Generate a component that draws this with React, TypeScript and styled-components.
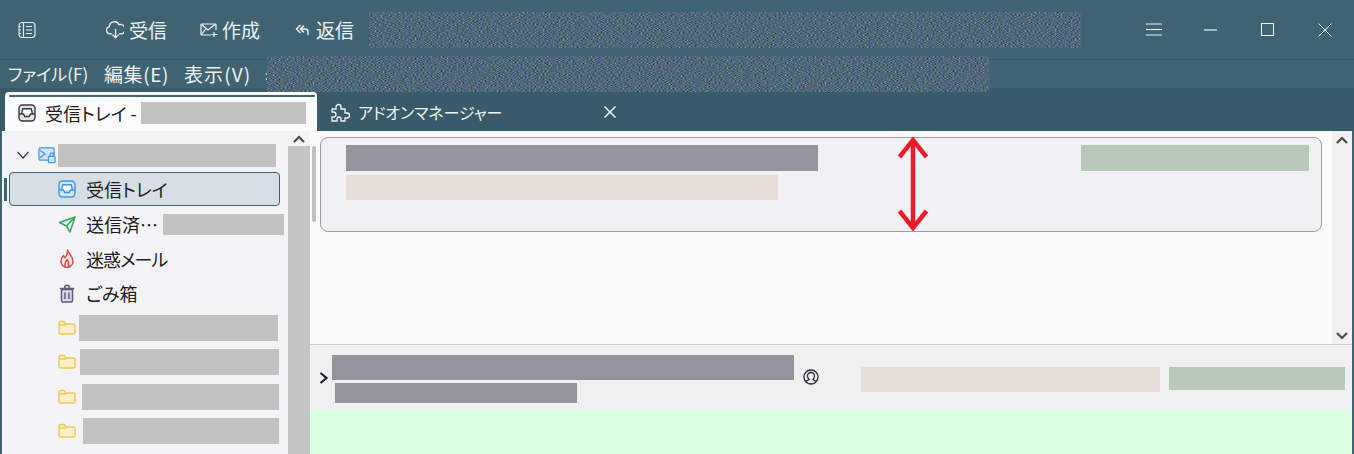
import React from 'react';
import styled, { createGlobalStyle } from 'styled-components';

const GlobalStyle = createGlobalStyle`
  html, body {
    margin: 0;
    padding: 0;
    background: #3f6372;
    overflow: hidden;
  }
  body {
    font-family: "Noto Sans CJK JP", "Noto Sans", sans-serif;
    font-feature-settings: "palt";
  }
`;

const Window = styled.div`
  width: 1354px;
  height: 454px;
  display: flex;
  flex-direction: column;
  overflow: hidden;
  background: #3f6372;
`;

const TitleBar = styled.div`
  height: 59px;
  flex: none;
  display: flex;
  align-items: center;
  border-bottom: 1px solid #37586a;
  box-sizing: content-box;
  padding-left: 18px;
  color: #eef3f4;
`;

const SidebarToggle = styled.div`
  width: 18px;
  height: 18px;
  flex: none;
  margin-right: 70px;
  display: flex;
`;

const ToolButton = styled.div<{ $width: number; $gap: number }>`
  width: ${({ $width }) => $width}px;
  flex: none;
  display: flex;
  align-items: center;
  gap: ${({ $gap }) => $gap}px;
  font-size: 19px;
  line-height: 24px;
  white-space: nowrap;
`;

const Noise = styled.div<{ $width: number; $height: number }>`
  position: relative;
  z-index: 2;
  flex: none;
  width: ${({ $width }) => $width}px;
  height: ${({ $height }) => $height}px;
  svg {
    display: block;
  }
`;

const WindowControls = styled.div`
  margin-left: 44px;
  flex: none;
  display: flex;
  align-items: center;
`;

const ControlButton = styled.div`
  width: 57px;
  height: 16px;
  display: flex;
  justify-content: center;
  align-items: center;
`;

const MenuBar = styled.div`
  height: 28px;
  flex: none;
  display: flex;
  align-items: center;
  padding-left: 8px;
  color: #eef3f4;
`;

const MenuItem = styled.div<{ $width: number; $size: number; $spacing?: number }>`
  width: ${({ $width }) => $width}px;
  flex: none;
  white-space: nowrap;
  line-height: 28px;
  font-size: ${({ $size }) => $size}px;
  letter-spacing: ${({ $spacing }) => $spacing ?? 0}px;
`;

const MenuDots = styled.span`
  width: 2px;
  font-size: 12px;
  margin-left: -1px;
`;

const TabBar = styled.div`
  height: 43px;
  flex: none;
  display: flex;
  align-items: flex-end;
  background: #385a69;
  padding-left: 5px;
  color: #f0f4f5;
`;

const ActiveTab = styled.div`
  width: 312px;
  height: 39px;
  box-sizing: border-box;
  background: #fbfbfc;
  border-radius: 4px 4px 0 0;
  display: flex;
  align-items: center;
  padding: 3px 0 0 13px;
  color: #1c1b22;
  font-size: 18px;
  position: relative;
  &::before {
    content: "";
    position: absolute;
    left: 4px;
    right: 2px;
    top: 3px;
    height: 2px;
    border-radius: 1px;
    background: #3f6372;
  }
`;

const TabLabel = styled.span`
  margin-left: 9px;
  white-space: nowrap;
  margin-right: 4px;
`;

const InactiveTab = styled.div`
  height: 39px;
  display: flex;
  align-items: center;
  padding: 3px 0 0 13px;
  font-size: 16px;
`;

const InactiveLabel = styled.span`
  width: 246px;
  margin-left: 7px;
  white-space: nowrap;
  letter-spacing: -0.1px;
`;

const Body = styled.div`
  flex: 1;
  min-height: 0;
  display: flex;
  background: #fafafb;
  padding: 0 2px;
  position: relative;
  &::before,
  &::after {
    content: "";
    position: absolute;
    top: 0;
    bottom: 0;
    width: 2px;
    background: #3f6372;
  }
  &::before {
    left: 0;
  }
  &::after {
    right: 0;
  }
`;

const Sidebar = styled.div`
  width: 286px;
  flex: none;
  background: #f4f4f6;
  padding-top: 7px;
  box-sizing: border-box;
  color: #1c1b22;
`;

const TreeRow = styled.div<{ $selected?: boolean }>`
  height: 34.5px;
  box-sizing: border-box;
  margin: 0 8px 0 7px;
  padding-left: 49px;
  display: flex;
  align-items: center;
  font-size: 18px;
  white-space: nowrap;
  position: relative;
  border-radius: 4px;
  ${({ $selected }) =>
    $selected &&
    `
    background: #d8dfe4;
    border: 1px solid #3f6372;
    padding-left: 48px;
    margin-top: -1px;
    margin-bottom: 1px;
    &::before {
      content: "";
      position: absolute;
      left: -6px;
      top: 5px;
      bottom: 4px;
      width: 3px;
      background: #3f6372;
    }
  `}
`;

const AccountRow = styled(TreeRow)`
  padding-left: 29px;
`;

const Twisty = styled.div`
  width: 12px;
  height: 12px;
  margin-left: -21px;
  margin-right: 9px;
  display: flex;
`;

const RowIcon = styled.div`
  width: 18px;
  height: 18px;
  flex: none;
  display: flex;
  align-items: center;
  justify-content: center;
`;

const RowLabel = styled.span<{ $spacing?: number }>`
  margin-left: 10px;
  letter-spacing: ${({ $spacing }) => $spacing ?? 0}px;
`;

const Redact = styled.div<{ $width: number; $height: number; $color?: string; $left?: number }>`
  flex: none;
  width: ${({ $width }) => $width}px;
  height: ${({ $height }) => $height}px;
  margin-left: ${({ $left }) => $left ?? 0}px;
  background: ${({ $color }) => $color ?? '#c2c2c2'};
`;

const SideScroll = styled.div`
  width: 22px;
  flex: none;
  background: #c4c4c4;
`;

const ScrollCap = styled.div`
  height: 15px;
  background: #f4f4f6;
  display: flex;
  justify-content: center;
  align-items: center;
`;

const Main = styled.div`
  flex: 1;
  min-width: 0;
  display: flex;
  flex-direction: column;
`;

const ListArea = styled.div`
  height: 213px;
  flex: none;
  display: flex;
  background: #fafafb;
  border-bottom: 1px solid #cfcfd2;
`;

const Splitter = styled.div`
  width: 10px;
  flex: none;
  padding: 15px 4px 0 2px;
  box-sizing: border-box;
`;

const SplitThumb = styled.div`
  height: 76px;
  border-radius: 2px;
  background: #bfc0c3;
`;

const ListContent = styled.div`
  width: 1012px;
  flex: none;
  padding: 6px 10px 0 0;
  box-sizing: border-box;
`;

const MessageCard = styled.div`
  height: 95px;
  box-sizing: border-box;
  background: #f1f1f3;
  border: 1px solid #9b9ba0;
  border-radius: 8px;
  padding: 7px 12px 0 25px;
  display: flex;
  position: relative;
`;

const CardLines = styled.div`
  display: flex;
  flex-direction: column;
  gap: 4px;
  flex: 1;
`;

const ArrowOverlay = styled.div`
  position: absolute;
  left: 577px;
  top: -1px;
  width: 30px;
  height: 94px;
`;

const ListScroll = styled.div`
  width: 20px;
  flex: none;
  background: #f0f0f0;
  display: flex;
  flex-direction: column;
  justify-content: space-between;
  align-items: center;
  padding: 5px 0 4px;
  box-sizing: border-box;
`;

const HeaderPane = styled.div`
  height: 65px;
  flex: none;
  background: #f0f0f0;
  display: flex;
  align-items: flex-start;
  padding-left: 9px;
  box-sizing: border-box;
`;

const HeaderChevron = styled.div`
  width: 13px;
  height: 14px;
  margin-top: 26px;
  flex: none;
  display: flex;
`;

const HeaderLines = styled.div`
  display: flex;
  flex-direction: column;
  padding-top: 10px;
  gap: 3px;
  width: 471px;
  flex: none;
`;

const PersonIcon = styled.div`
  width: 16px;
  height: 16px;
  margin-top: 24px;
  flex: none;
  display: flex;
`;

const HeaderRight = styled.div`
  display: flex;
  gap: 9px;
  margin-left: 42px;
  padding-top: 22px;
`;

const Preview = styled.div`
  flex: 1;
  background: #d8ffdf;
`;

const GREY = '#94949c';
const ROSE = '#e6ddd8';
const SAGE = '#b9c9b9';

const NoiseFill = ({ id, width, height }: { id: string; width: number; height: number }) => (
  <svg width={width} height={height}>
    <filter id={id} x="0" y="0" width="100%" height="100%" colorInterpolationFilters="sRGB">
      <feTurbulence type="fractalNoise" baseFrequency="0.5 1" numOctaves={2} seed={4} />
      <feColorMatrix
        type="matrix"
        values="0.75 0.2 0 0 -0.16  0.15 0.8 0 0 -0.07  0 0.15 0.9 0 -0.05  0 0 0 0 1"
      />
    </filter>
    <rect width={width} height={height} filter={`url(#${id})`} />
  </svg>
);

const CloudIcon = () => (
  <svg width="18" height="18" viewBox="0.5 1 16 16" fill="none" stroke="#eef3f4" strokeWidth="1.2">
    <path d="M6 12.500H4a3.300 3.300 0 0 1-.5-6.500 4.500 4.500 0 0 1 8.500-1.800 3.800 3.800 0 0 1 2.500 8.300H12" />
    <path d="M9 8v8M6.300 13.300 9 16l2.700-2.700" />
  </svg>
);

const ComposeIcon = () => (
  <svg width="18" height="16" viewBox="0 0 18 16" fill="none" stroke="#eef3f4" strokeWidth="1.2">
    <path d="M16 8V3a1 1 0 0 0-1-1H2a1 1 0 0 0-1 1v9a1 1 0 0 0 1 1h9" />
    <path d="M1.500 2.500 8 8l7-5.500M1.500 12.500 6 6.500" />
    <path d="M14 10v5M11.500 12.500h6" />
  </svg>
);

const ReplyIcon = () => (
  <svg width="15" height="14" viewBox="0 0 15 14" fill="none" stroke="#eef3f4" strokeWidth="1.4">
    <path d="M5.500 2 1.500 6l4 4" />
    <path d="M9 2.500 5.500 6 9 9.500" />
    <path d="M5.500 6H10a3 3 0 0 1 3 3v3" />
  </svg>
);

const InboxIcon = ({ color, fill }: { color: string; fill: string }) => (
  <svg width="18" height="18" viewBox="0 0 18 18" fill={fill} stroke={color} strokeWidth="1.4">
    <rect x="1" y="1" width="16" height="16" rx="3.500" />
    <path d="M3.500 10 4.800 4.800h8.400L14.500 10" fill="#fafcff" />
    <path d="M1 10h4.500l1.300 2.500h4.400L12.500 10H17" fill="none" />
  </svg>
);

const FolderIcon = () => (
  <svg width="18" height="16" viewBox="0 0 18 16" fill="#fdf0c9" stroke="#eec755" strokeWidth="1.400">
    <path d="M1 3a1.500 1.500 0 0 1 1.500-1.500H6l2 2.500h7.500A1.500 1.500 0 0 1 17 5.500v7a1.500 1.500 0 0 1-1.500 1.500h-13A1.500 1.500 0 0 1 1 12.500z" />
    <path d="M1 5h6l1.500-1" fill="none" />
  </svg>
);

const FolderRow = ({ width, left }: { width: number; left: number }) => (
  <TreeRow>
    <RowIcon><FolderIcon /></RowIcon>
    <Redact $width={width} $height={26} $left={left} />
  </TreeRow>
);

const Caret = ({ up, color = '#4a4a4f' }: { up?: boolean; color?: string }) => (
  <svg width="12" height="8" viewBox="0 0 12 8" fill="none" stroke={color} strokeWidth="2.200">
    <path d={up ? 'M1 7l5-5 5 5' : 'M1 1l5 5 5-5'} />
  </svg>
);

const App = () => {
  return (
    <Window>
      <GlobalStyle />
      <TitleBar>
        <SidebarToggle>
          <svg width="18" height="18" viewBox="0 0 18 18" fill="none" stroke="#dfe8ea" strokeWidth="1.200">
            <rect x="1" y="1.500" width="16" height="15" rx="3" />
            <path d="M5.500 1.500v15M8 5.500h6M8 9h6M8 12.500h6M1 5.500h2M1 9h2M1 12.500h2" />
          </svg>
        </SidebarToggle>
        <ToolButton $width={94} $gap={5}><CloudIcon />受信</ToolButton>
        <ToolButton $width={95} $gap={4}><ComposeIcon />作成</ToolButton>
        <ToolButton $width={74} $gap={6}><ReplyIcon />返信</ToolButton>
        <Noise $width={712} $height={36}>
          <NoiseFill id="n1" width={712} height={36} />
        </Noise>
        <WindowControls>
          <ControlButton>
            <svg width="16" height="13" viewBox="0 0 16 13" stroke="#eef3f4" strokeWidth="1">
              <path d="M0 1h16M0 6.500h16M0 12h16" />
            </svg>
          </ControlButton>
          <ControlButton>
            <svg width="13" height="2" viewBox="0 0 13 2" stroke="#eef3f4" strokeWidth="1.200">
              <path d="M0 1h13" />
            </svg>
          </ControlButton>
          <ControlButton>
            <svg width="13" height="13" viewBox="0 0 13 13" fill="none" stroke="#eef3f4" strokeWidth="1">
              <rect x=".5" y=".5" width="12" height="12" />
            </svg>
          </ControlButton>
          <ControlButton>
            <svg width="14" height="14" viewBox="0 0 14 14" stroke="#eef3f4" strokeWidth="1">
              <path d="M.5.500l13 13M13.500.500l-13 13" />
            </svg>
          </ControlButton>
        </WindowControls>
      </TitleBar>

      <MenuBar>
        <MenuItem $width={96} $size={17.1}>ファイル(F)</MenuItem>
        <MenuItem $width={80} $size={19} $spacing={0.6}>編集(E)</MenuItem>
        <MenuItem $width={82} $size={19} $spacing={1.1}>表示(V)</MenuItem>
        <MenuDots>:</MenuDots>
        <Noise $width={722} $height={36}>
          <NoiseFill id="n2" width={722} height={36} />
        </Noise>
      </MenuBar>

      <TabBar>
        <ActiveTab>
          <InboxIcon color="#3a3a40" fill="#e4e4e8" />
          <TabLabel>受信トレイ -</TabLabel>
          <Redact $width={165} $height={22} />
        </ActiveTab>
        <InactiveTab>
          <svg width="21" height="21" viewBox="0 0 21 21" fill="none" stroke="#eef3f4" strokeWidth="1.300">
            <path d="M2 8h4V6a2.500 2.500 0 0 1 5 0v2h4v4h2a2.500 2.500 0 0 1 0 5h-2v3h-4v-2a2 2 0 0 0-4 0v2H2v-4h1.500a2.500 2.500 0 0 0 0-5H2z" />
          </svg>
          <InactiveLabel>アドオンマネージャー</InactiveLabel>
          <svg width="12" height="12" viewBox="0 0 12 12" stroke="#f4f7f8" strokeWidth="1.500">
            <path d="M.5.500l11 11M11.500.500l-11 11" />
          </svg>
        </InactiveTab>
      </TabBar>

      <Body>
        <Sidebar>
          <AccountRow>
            <Twisty>
              <svg width="12" height="12" viewBox="0 0 12 12" fill="none" stroke="#333" strokeWidth="1.200">
                <path d="M.5 3l5.500 6 5.500-6" />
              </svg>
            </Twisty>
            <RowIcon>
              <svg width="19" height="18" viewBox="0 0 19 18" fill="#cfe6fb" stroke="#3d96e6" strokeWidth="1.300">
                <rect x="1" y="1.500" width="16" height="13" rx="1.500" />
                <path d="M2 4l5.500 4L2 12" fill="none" />
                <rect x="11" y="10.500" width="7" height="6.500" rx="1" fill="#cfe6fb" />
                <path d="M12.800 10.500V8.500a1.700 1.700 0 0 1 3.400 0v2" fill="none" />
              </svg>
            </RowIcon>
            <Redact $width={218} $height={23} $left={2} />
          </AccountRow>
          <TreeRow $selected>
            <RowIcon><InboxIcon color="#3d96e6" fill="#cfe6fb" /></RowIcon>
            <RowLabel>受信トレイ</RowLabel>
          </TreeRow>
          <TreeRow>
            <RowIcon>
              <svg width="18" height="18" viewBox="0 0 18 18" fill="#e0f5e6" stroke="#33a866" strokeWidth="1.500" strokeLinejoin="round">
                <path d="M1.500 7.500 17 2l-5 15-3.500-6z" />
                <path d="M8.500 11 17 2" fill="none" />
              </svg>
            </RowIcon>
            <RowLabel>送信済…</RowLabel>
            <Redact $width={121} $height={21} $left={5} />
          </TreeRow>
          <TreeRow>
            <RowIcon>
              <svg width="18" height="20" viewBox="0 0 18 20" fill="#fbe4e4" stroke="#dd4a4a" strokeWidth="1.500" strokeLinejoin="round">
                <path d="M9.500 1c.5 3.500 5.500 5.500 5.500 11.500A6 6 0 0 1 9 18.500a6 6 0 0 1-6-6c0-2.700 1-4.500 2.500-6 .4 1.100.8 1.700 1.500 2.200C8.700 6.500 9.800 4 9.500 1z" />
                <path d="M9 10.500c1.500 2 2.500 4 1.700 8M9 10.500c-1.500 2-2.500 4-1.700 8" fill="#f4f4f6" />
              </svg>
            </RowIcon>
            <RowLabel $spacing={-1}>迷惑メール</RowLabel>
          </TreeRow>
          <TreeRow>
            <RowIcon>
              <svg width="16" height="19" viewBox="0 0 16 19" fill="#dcdaea" stroke="#5c5a7a" strokeWidth="1.500">
                <path d="M2.500 5.500h11v11a1.500 1.500 0 0 1-1.500 1.500H4a1.500 1.500 0 0 1-1.500-1.500z" />
                <path d="M.8 4.500h14.400M5.500 4.200l.8-2.700h3.400l.8 2.700M6 8.500v6.500M10 8.500v6.500" fill="none" />
              </svg>
            </RowIcon>
            <RowLabel>ごみ箱</RowLabel>
          </TreeRow>
          <FolderRow width={199} left={3} />
          <FolderRow width={199} left={4} />
          <FolderRow width={197} left={6} />
          <FolderRow width={196} left={7} />
        </Sidebar>
        <SideScroll>
          <ScrollCap><Caret up /></ScrollCap>
        </SideScroll>
        <Main>
          <ListArea>
            <Splitter><SplitThumb /></Splitter>
            <ListContent>
              <MessageCard>
                <CardLines>
                  <Redact $width={472} $height={26} $color={GREY} />
                  <Redact $width={432} $height={25} $color={ROSE} />
                </CardLines>
                <Redact $width={228} $height={26} $color={SAGE} />
                <ArrowOverlay>
                  <svg width="30" height="94" viewBox="0 0 30 94" fill="none" stroke="#ea1c2c" strokeWidth="4.500">
                    <path d="M15 3v88" />
                    <path d="M1.500 20 15 3l13.500 17M1.500 74 15 91l13.500-17" />
                  </svg>
                </ArrowOverlay>
              </MessageCard>
            </ListContent>
            <ListScroll>
              <Caret up />
              <Caret />
            </ListScroll>
          </ListArea>
          <HeaderPane>
            <HeaderChevron>
              <svg width="10" height="14" viewBox="0 0 10 14" fill="none" stroke="#1c1b22" strokeWidth="2.200">
                <path d="M1.500 2l6 5-6 5" />
              </svg>
            </HeaderChevron>
            <HeaderLines>
              <Redact $width={462} $height={25} $color={GREY} />
              <Redact $width={242} $height={20} $color={GREY} $left={3} />
            </HeaderLines>
            <PersonIcon>
              <svg width="16" height="16" viewBox="0 0 16 16" fill="none" stroke="#2b2a33" strokeWidth="1.300">
                <circle cx="8" cy="8" r="7" />
                <path d="M3.500 13v-1l2.500-1.500c-1-1-1.500-2-1.500-3.500a3.500 3.500 0 0 1 7 0c0 1.500-.5 2.500-1.500 3.500l2.500 1.500v1" />
              </svg>
            </PersonIcon>
            <HeaderRight>
              <Redact $width={299} $height={25} $color={ROSE} />
              <Redact $width={176} $height={23} $color={SAGE} />
            </HeaderRight>
          </HeaderPane>
          <Preview />
        </Main>
      </Body>
    </Window>
  );
};

export default App;
